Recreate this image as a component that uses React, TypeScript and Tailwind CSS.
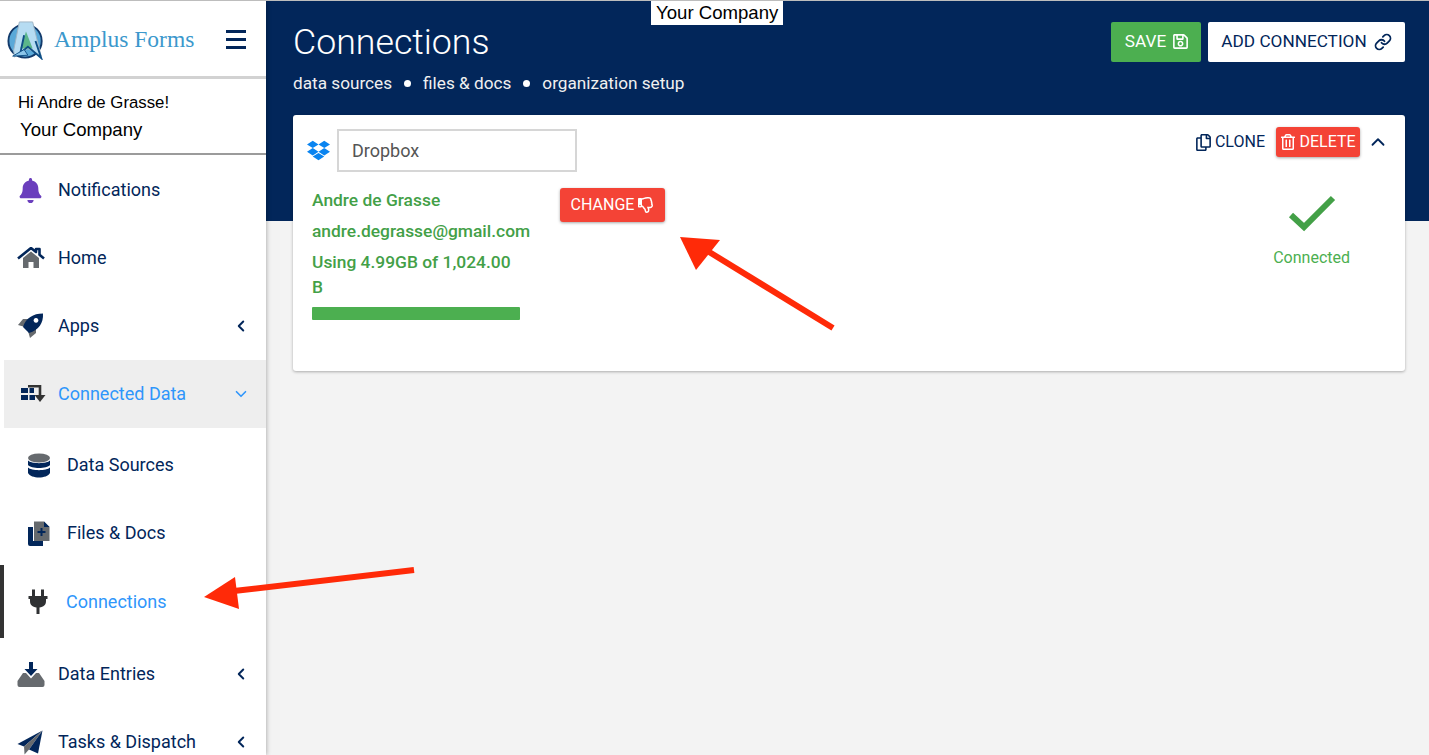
import type { ReactNode } from 'react';
import { ChevronDown, ChevronLeft, ChevronUp, Link as LinkIcon } from 'lucide-react';
import { FaBell, FaDropbox, FaRegCopy, FaRegSave, FaRegThumbsDown, FaRegTrashAlt } from 'react-icons/fa';

const NAVY = '#02265a';
const GREY = '#666a6e';

function LogoMark() {
  return (
    <svg width="38" height="40" viewBox="0 0 40 42" className="shrink-0">
      <circle cx="19" cy="22" r="17.5" fill="#5aa9d8" stroke="#123a6b" strokeWidth="2" />
      <path d="M7 32 L13 2 L27 2 L36 38 L22 30 L8 39 Z" fill="#b6dcf2" stroke="#9fb4c4" strokeWidth="1" />
      <path d="M20 12 L27 30 L14 30 Z" fill="#5bb68a" />
      <path d="M18 16 L14 35 L22 28 L36 40 L30 22" fill="none" stroke="#0f4f86" strokeWidth="2" />
      <path d="M6 38 L18 31 L22 37 Z" fill="#8cc6ea" stroke="#0f4f86" strokeWidth="1" />
    </svg>
  );
}

function HomeIcon() {
  return (
    <svg width="28" height="22" viewBox="0 0 28 22">
      <path d="M6 11 L14 4.5 L22 11 V21 H16.5 V15 H11.5 V21 H6 Z" fill={GREY} />
      <path d="M1 11.5 L14 1 L19 5 V2 H22.5 V7.8 L27 11.5" fill="none" stroke={NAVY} strokeWidth="2.6" strokeLinejoin="round" />
    </svg>
  );
}

function RocketIcon() {
  return (
    <svg width="28" height="26" viewBox="0 0 28 26">
      <path d="M1 12 L6 6 H12 L8 14 Z" fill={GREY} />
      <path d="M13 25 L19 20 V14 L11 18 Z" fill={GREY} />
      <path d="M6 14 C9 5 16 0.5 26 0.5 C26.5 10 22 17 12 20 Z M19 5 a2.4 2.4 0 1 0 0.01 0 Z" fill={NAVY} fillRule="evenodd" />
    </svg>
  );
}

function ConnectedIcon() {
  return (
    <svg width="25" height="18" viewBox="0 0 25 18">
      <path d="M0 3 H7 V8 H0 Z M8.5 3 H13 V8 H8.5 Z M0 10 H7 V15 H0 Z M8.5 10 H14 V15 H8.5 Z" fill={NAVY} />
      <path d="M7 1.2 H19 V11" fill="none" stroke="#333" strokeWidth="2.6" />
      <path d="M13.5 10 H24.5 L19 17 Z" fill="#333" />
    </svg>
  );
}

function DatabaseIcon() {
  return (
    <svg width="22" height="25" viewBox="0 0 22 25">
      <ellipse cx="11" cy="5" rx="11" ry="4.6" fill={GREY} />
      <path d="M0 7.5 C3 11 19 11 22 7.5 V12 C19 16 3 16 0 12 Z" fill={NAVY} />
      <path d="M0 14.5 C3 18 19 18 22 14.5 V20 C19 26 3 26 0 20 Z" fill={NAVY} />
    </svg>
  );
}

function FilesIcon() {
  return (
    <svg width="22" height="25" viewBox="0 0 22 25">
      <path d="M0 6 H5 V20 H15 V25 H2 Q0 25 0 23 Z" fill={NAVY} />
      <path d="M6 0.5 H16 L21.5 6 V20 H6 Z" fill={GREY} />
      <path d="M16 0.5 L21.5 6 H16 Z" fill={NAVY} />
      <path d="M12.5 7 H14.5 V10 H17.5 V12 H14.5 V15 H12.5 V12 H9.5 V10 H12.5 Z" fill={NAVY} />
    </svg>
  );
}

function PlugIcon() {
  return (
    <svg width="20" height="25" viewBox="0 0 20 25">
      <path d="M4 0.5 H7 V7 H13 V0.5 H16 V7 H19.5 V10 H18 V12 C18 16 15.5 18 11.5 18.5 V25 H8.5 V18.5 C4.5 18 2 16 2 12 V10 H0.5 V7 H4 Z" fill="#2f3133" />
    </svg>
  );
}

function InboxIcon() {
  return (
    <svg width="28" height="25" viewBox="0 0 28 25">
      <path d="M6 11 L0.5 19 V23 Q0.5 25 2.5 25 H25.5 Q27.5 25 27.5 23 V19 L22 11 H19 L14 16.5 L9 11 Z" fill={GREY} />
      <path d="M12 0 H16 V7 H20.5 L14 14 L7.5 7 H12 Z" fill={NAVY} />
    </svg>
  );
}

function PlaneIcon() {
  return (
    <svg width="26" height="25" viewBox="0 0 26 25">
      <path d="M25.5 0.5 L0.5 14 L7 16.5 Z" fill={NAVY} />
      <path d="M25.5 0.5 L7 16.5 L7.5 24.5 L12 19.5 Z" fill={GREY} />
      <path d="M25.5 0.5 L12 19.5 L21 23.5 Z" fill={NAVY} />
    </svg>
  );
}

type NavItemProps = {
  icon: ReactNode;
  label: string;
  chevron?: 'left' | 'down';
  active?: boolean;
};

function NavItem({ icon, label, chevron, active }: NavItemProps) {
  return (
    <div className={`flex h-[68px] items-center pr-[16px] ${active ? 'ml-1 bg-[#eeeeee] pl-[13px]' : 'pl-[17px]'}`}>
      <span className="flex w-[41px] shrink-0 items-center">{icon}</span>
      <span className={`flex-1 pb-[1px] text-[18px] ${active ? 'text-[#2f96fb]' : 'text-[#02265a]'}`}>{label}</span>
      {chevron === 'left' && <ChevronLeft size={18} strokeWidth={2.6} className="text-[#02265a]" />}
      {chevron === 'down' && <ChevronDown size={18} strokeWidth={2.2} className="text-[#2f96fb]" />}
    </div>
  );
}

function Sidebar() {
  return (
    <aside className="relative z-10 flex h-full w-[266px] shrink-0 flex-col overflow-hidden bg-white shadow-[1px_0_4px_rgba(0,0,0,0.25)]">
      <div className="flex h-[78px] shrink-0 items-center border-b-[3px] border-[#d2d2d2] pt-[2px] pr-[20px] pl-[7px]">
        <LogoMark />
        <span className="ml-[9px] flex-1 font-['Liberation_Serif',serif] text-[23.5px] text-[#3b98cc]">Amplus Forms</span>
        <div className="flex w-[20px] flex-col gap-[5px]">
          <div className="h-[3px] bg-[#02265a]" />
          <div className="h-[3px] bg-[#02265a]" />
          <div className="h-[3px] bg-[#02265a]" />
        </div>
      </div>
      <div className="h-[76px] shrink-0 border-b-2 border-[#9b9b9b] pt-[10px] pl-[18px] font-['Liberation_Sans',sans-serif] text-[16.8px] leading-[27px] text-black">
        <div>Hi Andre de Grasse!</div>
        <div className="ml-[2px] text-[18.6px]">Your Company</div>
      </div>
      <nav className="mt-[1px] flex flex-col">
        <NavItem icon={<FaBell size={25} className="ml-[1px] text-[#6b3fbd]" />} label="Notifications" />
        <NavItem icon={<HomeIcon />} label="Home" />
        <NavItem icon={<RocketIcon />} label="Apps" chevron="left" />
        <NavItem icon={<span className="ml-[4px] flex"><ConnectedIcon /></span>} label="Connected Data" chevron="down" active />
        <div className="mt-[3px] h-[68px] pl-[28px]">
          <div className="flex h-full items-center">
            <span className="flex w-[39px] items-center"><DatabaseIcon /></span>
            <span className="pb-[1px] text-[18px] text-[#02265a]">Data Sources</span>
          </div>
        </div>
        <div className="h-[68px] pl-[28px]">
          <div className="flex h-full items-center">
            <span className="flex w-[39px] items-center"><FilesIcon /></span>
            <span className="pb-[1px] text-[18px] text-[#02265a]">Files &amp; Docs</span>
          </div>
        </div>
        <div className="mt-[-2px] flex h-[73px] items-center border-l-4 border-[#333333] pl-[24px]">
          <span className="flex w-[38px] items-center"><PlugIcon /></span>
          <span className="text-[18px] text-[#2f96fb]">Connections</span>
        </div>
        <div className="mt-[2px]">
          <NavItem icon={<InboxIcon />} label="Data Entries" chevron="left" />
        </div>
        <NavItem icon={<PlaneIcon />} label="Tasks & Dispatch" chevron="left" />
      </nav>
    </aside>
  );
}

function ConnectionCard() {
  return (
    <div className="mt-[-106px] mr-[24px] ml-[27px] h-[256px] rounded-[3px] bg-white shadow-[0_1px_3px_rgba(0,0,0,0.3)]">
      <div className="flex items-start justify-between pt-[14px] pr-[16px] pl-[14px]">
        <div className="flex items-center gap-[7px]">
          <FaDropbox size={23} className="text-[#0a84f0]" />
          <div className="flex h-[43px] w-[240px] items-center border-2 border-[#d6d6d6] pl-[13px] text-[18px] text-[#555555]">Dropbox</div>
        </div>
        <div className="mt-[-2px] flex items-center">
          <FaRegCopy size={17} className="text-[#02265a]" />
          <span className="ml-[3px] text-[16px] text-[#02265a]">CLONE</span>
          <div className="ml-[11px] flex h-[30px] w-[84px] items-center justify-center gap-[3px] rounded-[3px] bg-[#f44336] text-[16px] text-white shadow-[0_1px_3px_rgba(0,0,0,0.35)]">
            <FaRegTrashAlt size={16} />
            <span>DELETE</span>
          </div>
          <ChevronUp size={22} strokeWidth={2} className="ml-[7px] text-[#02265a]" />
        </div>
      </div>
      <div className="flex justify-between pr-[55px] pl-[19px]">
        <div className="flex">
          <div className="w-[208px] text-[17.4px] font-medium text-[#43a047]">
            <div className="mt-[15px] leading-[26px]">Andre de Grasse</div>
            <div className="mt-[5px] leading-[26px] whitespace-nowrap">andre.degrasse@gmail.com</div>
            <div className="mt-[6px] leading-[25px]">Using 4.99GB of 1,024.00 B</div>
            <div className="mt-[7px] h-[13px] w-[208px] rounded-[1px] bg-[#4caf50]" />
          </div>
          <div className="mt-[16px] ml-[40px] flex h-[34px] w-[105px] items-center justify-center gap-[4px] rounded-[3px] bg-[#f44336] text-[16px] text-white shadow-[0_1px_3px_rgba(0,0,0,0.35)]">
            <span>CHANGE</span>
            <FaRegThumbsDown size={16} />
          </div>
        </div>
        <div className="flex flex-col items-center">
          <svg width="48" height="38" viewBox="0 0 48 38" className="mt-[22px]">
            <path d="M3 21 L16 33 L45 4" fill="none" stroke="#43a047" strokeWidth="6" strokeLinejoin="miter" />
          </svg>
          <div className="mt-[14px] text-[16px] text-[#4caf50]">Connected</div>
        </div>
      </div>
    </div>
  );
}

export default function App() {
  return (
    <div className="relative flex h-[755px] w-[1429px] overflow-hidden border-t border-[#bdbdbd] bg-[#f3f3f3] font-['Roboto',sans-serif]">
      <Sidebar />
      <main className="flex-1">
        <header className="flex h-[220px] justify-between bg-[#02265a] pt-[21px] pr-[24px] pl-[27px]">
          <div>
            <h1 className="text-[35.7px] leading-[40px] font-light text-white">Connections</h1>
            <div className="mt-[10px] flex items-center text-[17.2px] leading-[22px] text-[#f0f0f0]">
              <span>data sources</span>
              <span className="mx-[12px] h-[7px] w-[7px] rounded-full bg-white" />
              <span>files &amp; docs</span>
              <span className="mx-[12px] h-[7px] w-[7px] rounded-full bg-white" />
              <span>organization setup</span>
            </div>
          </div>
          <div className="flex gap-[7px]">
            <div className="flex h-[40px] w-[90px] items-center justify-center gap-[6px] rounded-[2px] bg-[#4caf50] pb-[1px] pl-[2px] text-[17.2px] text-white">
              <span>SAVE</span>
              <FaRegSave size={17} />
            </div>
            <div className="flex h-[40px] w-[197px] items-center justify-center gap-[7px] rounded-[2px] bg-white pb-[1px] text-[17.2px] text-[#02265a]">
              <span>ADD CONNECTION</span>
              <LinkIcon size={18} strokeWidth={2.4} />
            </div>
          </div>
        </header>
        <ConnectionCard />
      </main>
      <div className="absolute top-0 left-[651px] z-20 bg-white px-[5px] font-['Liberation_Sans',sans-serif] text-[18.6px] leading-[24px] text-black">
        Your Company
      </div>
      <svg width="1429" height="755" className="pointer-events-none absolute top-[-1px] left-0 z-30">
        <path d="M414 570 L234 591" stroke="#ff2a08" strokeWidth="6" fill="none" />
        <path d="M204 597 L235 577 L239 609 Z" fill="#ff2a08" />
        <path d="M833 328 L706 250" stroke="#ff2a08" strokeWidth="6" fill="none" />
        <path d="M680 237 L720 240 L696 270 Z" fill="#ff2a08" />
      </svg>
    </div>
  );
}
